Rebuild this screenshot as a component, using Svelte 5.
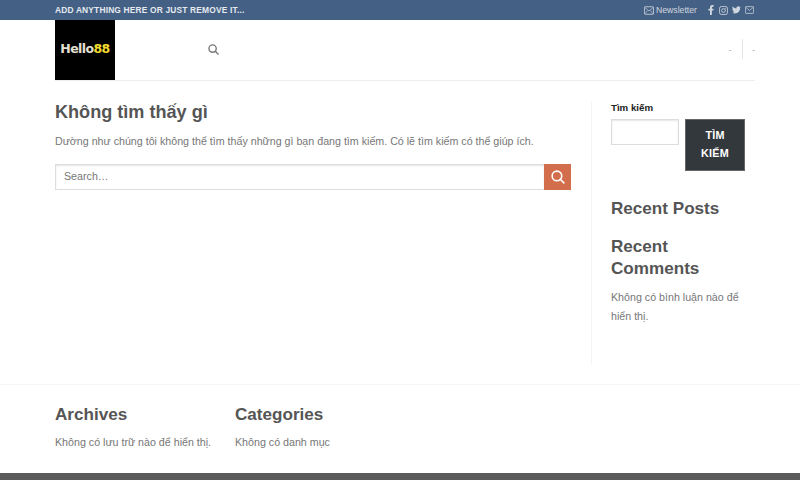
<script>
    const socials = ['facebook', 'instagram', 'twitter', 'mail'];
</script>

<div class="page">
    <div class="topbar">
        <span class="promo">ADD ANYTHING HERE OR JUST REMOVE IT...</span>
        <div class="top-links">
            <svg class="mail" viewBox="0 0 12 10" width="10" height="9">
                <rect x="0.5" y="0.5" width="11" height="9" rx="1" fill="none" stroke="currentColor" />
                <path d="M1 1.5l5 4 5-4M1 9l3.5-4M11 9L7.500 5" fill="none" stroke="currentColor" stroke-width="0.8" />
            </svg>
            <span class="newsletter">Newsletter</span>
            <div class="socials">
                {#each socials as name}
                    {#if name === 'facebook'}
                        <svg class="fb" viewBox="0 0 8 14" width="6" height="10"><path d="M5.200 14V7.800h2l.4-2.500H5.200V3.800c0-.8.300-1.200 1.200-1.200h1.300V.2C7.400.1 6.700 0 5.900 0 4 0 2.600 1.200 2.600 3.400v1.900H.4v2.500h2.200V14z" fill="currentColor" /></svg>
                    {:else if name === 'instagram'}
                        <svg viewBox="0 0 12 12" width="9" height="9"><rect x="0.6" y="0.6" width="10.800" height="10.800" rx="3" fill="none" stroke="currentColor" stroke-width="1.100" /><circle cx="6" cy="6" r="2.500" fill="none" stroke="currentColor" stroke-width="1.100" /><circle cx="9" cy="3" r="0.700" fill="currentColor" /></svg>
                    {:else if name === 'twitter'}
                        <svg viewBox="0 0 24 20" width="9" height="8"><path d="M24 2.400c-.9.400-1.800.7-2.800.8 1-.6 1.800-1.600 2.200-2.700-1 .6-2 1-3.100 1.200C19.300.7 18 0 16.600 0c-2.700 0-4.900 2.200-4.900 4.900 0 .4 0 .8.100 1.100C7.700 5.800 4.100 3.900 1.700.9c-.4.700-.7 1.600-.7 2.500 0 1.700.9 3.200 2.200 4.100-.8 0-1.600-.2-2.200-.6v.1c0 2.400 1.700 4.400 3.900 4.800-.4.100-.8.200-1.300.2-.3 0-.6 0-.9-.1.600 2 2.400 3.400 4.600 3.400-1.700 1.300-3.800 2.100-6.100 2.100-.4 0-.8 0-1.200-.1C2.200 18.200 4.800 19 7.500 19c9.100 0 14-7.500 14-14v-.6c1-.7 1.800-1.600 2.500-2z" fill="currentColor" /></svg>
                    {:else}
                        <svg viewBox="0 0 12 10" width="9" height="8"><rect x="0.5" y="0.5" width="11" height="9" rx="1" fill="none" stroke="currentColor" /><path d="M1 1.500l5 4 5-4" fill="none" stroke="currentColor" stroke-width="0.9" /></svg>
                    {/if}
                {/each}
            </div>
        </div>
    </div>

    <header class="header">
        <div class="logo"><span class="hello">Hello</span><span class="eight">88</span></div>
        <svg class="header-search" viewBox="0 0 12 12" width="11" height="11">
            <circle cx="5" cy="5" r="4" fill="none" stroke="currentColor" stroke-width="1.500" />
            <path d="M8 8l3.500 3.500" stroke="currentColor" stroke-width="1.500" />
        </svg>
        <div class="header-right">
            <span class="dot">-</span>
            <span class="divider"></span>
            <span class="dot">-</span>
        </div>
    </header>

    <main class="main">
        <section class="content">
            <h1>Không tìm thấy gì</h1>
            <p>Dường như chúng tôi không thể tìm thấy những gì bạn đang tìm kiếm. Có lẽ tìm kiếm có thể giúp ích.</p>
            <form class="search">
                <input type="text" placeholder="Search…" />
                <button type="button" aria-label="Search">
                    <svg viewBox="0 0 16 16" width="14" height="14">
                        <circle cx="6.800" cy="6.800" r="5.500" fill="none" stroke="currentColor" stroke-width="1.800" />
                        <path d="M10.800 10.800l4.500 4.500" stroke="currentColor" stroke-width="1.800" />
                    </svg>
                </button>
            </form>
        </section>

        <aside class="sidebar">
            <div class="widget-label">Tìm kiếm</div>
            <div class="widget-search">
                <input type="text" />
                <button type="button">TÌM KIẾM</button>
            </div>
            <h2 class="recent-posts">Recent Posts</h2>
            <h2 class="recent-comments">Recent Comments</h2>
            <p class="no-comments">Không có bình luận nào để hiển thị.</p>
        </aside>
    </main>

    <section class="widgets">
        <div class="archives">
            <h2>Archives</h2>
            <p>Không có lưu trữ nào để hiển thị.</p>
        </div>
        <div>
            <h2>Categories</h2>
            <p>Không có danh mục</p>
        </div>
    </section>

    <footer class="footer"></footer>
</div>

<style>
    :global(body) {
        margin: 0;
        background: #fff;
    }

    .page {
        width: 800px;
        height: 480px;
        overflow: hidden;
        display: flex;
        flex-direction: column;
        font-family: "Liberation Sans", Arial, sans-serif;
        color: #777;
    }

    .topbar {
        height: 20px;
        flex: none;
        background: #446084;
        padding: 0 46px 0 55px;
        display: flex;
        align-items: center;
        justify-content: space-between;
        color: rgba(255, 255, 255, 0.75);
    }

    .promo {
        font-size: 8.400px;
        font-weight: 700;
        letter-spacing: 0.18px;
        color: #e6eaf0;
    }

    .top-links {
        display: flex;
        align-items: center;
        font-size: 8.700px;
    }

    .newsletter {
        margin-left: 2px;
    }

    .socials {
        display: flex;
        align-items: center;
        gap: 4px;
        margin-left: 11px;
    }

    .socials svg {
        display: block;
    }

    .socials .fb {
        margin-right: 1px;
    }

    .header {
        height: 60px;
        flex: none;
        margin: 0 45px 0 55px;
        border-bottom: 1px solid #eee;
        display: flex;
        align-items: center;
    }

    .logo {
        width: 60px;
        height: 60px;
        padding-bottom: 3px;
        box-sizing: border-box;
        background: #000;
        display: flex;
        align-items: center;
        justify-content: center;
        font-family: "DejaVu Sans", sans-serif;
        font-size: 12.500px;
        font-weight: 700;
        letter-spacing: -0.6px;
    }

    .hello {
        color: #e4e0d4;
    }

    .eight {
        color: #f3dc2e;
    }

    .header-search {
        margin-left: 93px;
        margin-bottom: 2px;
        color: #777;
    }

    .header-right {
        margin-left: auto;
        margin-bottom: 2px;
        display: flex;
        align-items: center;
        font-size: 8px;
        color: #888;
    }

    .divider {
        width: 1px;
        height: 20px;
        background: #e6e6e6;
        margin: 0 9px 0 11px;
    }

    .main {
        height: 263px;
        flex: none;
        margin: 20px 0;
        padding-left: 55px;
        display: flex;
    }

    .content {
        width: 516px;
        flex: none;
    }

    h1 {
        margin: 0;
        font-size: 18.100px;
        line-height: 22px;
        color: #555;
    }

    .content p {
        margin: 9px 0 0;
        font-size: 10.680px;
        line-height: 19px;
    }

    .search {
        display: flex;
        height: 26px;
        margin-top: 13px;
    }

    .search input {
        flex: 1;
        min-width: 0;
        box-sizing: border-box;
        height: 26px;
        padding: 0 8px 2px;
        border: 1px solid #ddd;
        border-right: none;
        box-shadow: inset 0 1px 2px rgba(0, 0, 0, 0.1);
        font: 10.680px "Liberation Sans", Arial, sans-serif;
        color: #777;
        outline: none;
    }

    .search input::placeholder {
        color: #777;
        opacity: 1;
    }

    .search button {
        width: 27px;
        height: 26px;
        padding: 0;
        border: none;
        background: #d26e4b;
        color: #fff;
        display: flex;
        align-items: center;
        justify-content: center;
    }

    .sidebar {
        margin-left: 20px;
        padding: 0 0 0 19px;
        width: 134px;
        flex: none;
        border-left: 1px solid #f4f4f4;
    }

    .widget-label {
        font-size: 9.700px;
        font-weight: 700;
        line-height: 14px;
        color: #222;
    }

    .widget-search {
        display: flex;
        align-items: flex-start;
        gap: 6px;
        margin-top: 4px;
    }

    .widget-search input {
        width: 68px;
        height: 26px;
        box-sizing: border-box;
        border: 1px solid #ddd;
        box-shadow: inset 0 1px 2px rgba(0, 0, 0, 0.1);
        padding: 0;
        outline: none;
    }

    .widget-search button {
        width: 60px;
        height: 52px;
        flex: none;
        box-sizing: border-box;
        padding: 0 8px 2px;
        border: 1px solid #666;
        background: #33383d;
        color: #fff;
        font: 700 10.800px/18px "Liberation Sans", Arial, sans-serif;
        letter-spacing: 0.2px;
    }

    .sidebar h2 {
        margin: 0;
        font-size: 17.100px;
        line-height: 22px;
        color: #555;
    }

    .recent-posts {
        padding-top: 27px;
    }

    .sidebar .recent-comments {
        margin-top: 16px;
    }

    .no-comments {
        margin: 8px 0 0;
        font-size: 10.680px;
        line-height: 19px;
    }

    .widgets {
        flex: 1;
        border-top: 1px solid #f6f6f6;
        padding: 19px 0 0 55px;
        display: flex;
    }

    .archives {
        width: 180px;
        flex: none;
    }

    .widgets h2 {
        margin: 0;
        font-size: 17.100px;
        line-height: 22px;
        color: #555;
    }

    .widgets p {
        margin: 7px 0 0;
        font-size: 10.680px;
        line-height: 19px;
    }

    .footer {
        height: 7px;
        flex: none;
        background: #5b5b5b;
    }
</style>
